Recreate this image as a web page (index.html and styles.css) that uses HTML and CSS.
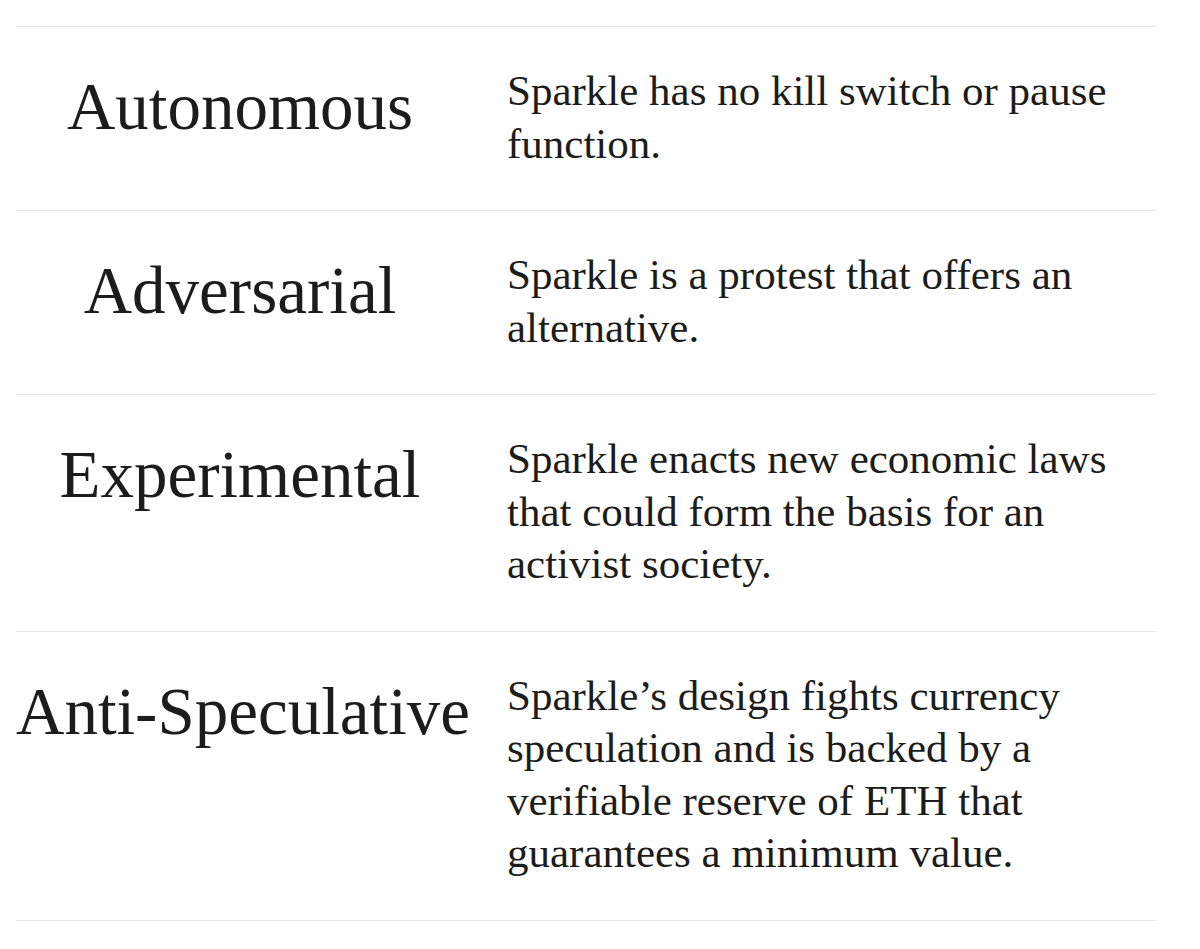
FILE: index.html
```html
<!DOCTYPE html>
<html>
<head>
<meta charset="utf-8">
<link rel="stylesheet" href="styles.css">
</head>
<body>
<div class="list">
  <div class="row">
    <h2 class="title">Autonomous</h2>
    <p class="desc">Sparkle has no kill switch or pause function.</p>
  </div>
  <div class="row">
    <h2 class="title">Adversarial</h2>
    <p class="desc">Sparkle is a protest that offers an alternative.</p>
  </div>
  <div class="row">
    <h2 class="title">Experimental</h2>
    <p class="desc">Sparkle enacts new economic laws that could form the basis for an activist society.</p>
  </div>
  <div class="row">
    <h2 class="title">Anti-Speculative</h2>
    <p class="desc">Sparkle’s design fights currency speculation and is backed by a verifiable reserve of ETH that guarantees a minimum value.</p>
  </div>
</div>
</body>
</html>
```
FILE: styles.css
```css
html, body {
  margin: 0;
  padding: 0;
  background: #ffffff;
}
body {
  font-family: "Liberation Serif", "Times New Roman", serif;
  color: #1c1c1a;
}
.list {
  margin: 26px 0 0 16px;
  width: 1140px;
  border-bottom: 1px solid #e6e6e6;
}
.row {
  display: grid;
  grid-template-columns: 448px 1fr;
  column-gap: 43px;
  align-items: start;
  border-top: 1px solid #e6e6e6;
  padding: 36px 0 40px;
}
.title {
  margin: 0;
  text-align: center;
  font-weight: 400;
  font-size: 67px;
  line-height: 86px;
  white-space: nowrap;
}
.desc {
  margin: 2px 0 0;
  font-size: 43px;
  line-height: 52.5px;
  max-width: 640px;
}
```
